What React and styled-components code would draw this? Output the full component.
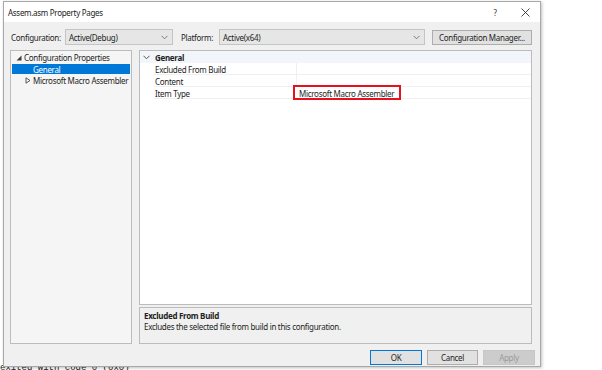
import React from 'react';
import styled, { createGlobalStyle } from 'styled-components';

const GlobalStyle = createGlobalStyle`
    html, body {
        margin: 0;
        padding: 0;
        background: #ffffff;
    }
    body {
        font-family: "Noto Sans", "Open Sans", sans-serif;
        font-size: 8px;
        letter-spacing: -0.3px;
        color: #1e1e1e;
    }
    svg {
        flex-shrink: 0;
    }
`

const Chevron = ({ color = '#6d6d6d' }) => (
    <svg width="7" height="5" viewBox="0 0 7 5">
        <path d="M0.5 0.8 L3.5 3.8 L6.5 0.8" fill="none" stroke={color} strokeWidth="0.9" />
    </svg>
)

const Triangle = ({ open }) => open ? (
    <svg width="6" height="6" viewBox="0 0 6 6">
        <path d="M5.5 0.5 L5.5 5.5 L0.5 5.5 Z" fill="#3c3c3c" />
    </svg>
) : (
    <svg width="6" height="7" viewBox="0 0 6 7">
        <path d="M1 0.8 L5 3.5 L1 6.2 Z" fill="none" stroke="#4a4a4a" strokeWidth="0.9" />
    </svg>
)

const App = () => {
    return (
        <Desktop>
            <GlobalStyle />
            <OutputLine>exited with code 0 (0x0)</OutputLine>
            <Dialog>
                <TitleBar>
                    <Title>Assem.asm Property Pages</Title>
                    <TitleButtons>
                        <TitleButton>?</TitleButton>
                        <TitleButton>
                            <svg width="9" height="9" viewBox="0 0 9 9">
                                <path d="M0.5 0.5 L8.5 8.5 M8.5 0.5 L0.5 8.5" stroke="#333" strokeWidth="0.9" />
                            </svg>
                        </TitleButton>
                    </TitleButtons>
                </TitleBar>
                <Body>
                    <ConfigRow>
                        <Label width="55px">Configuration:</Label>
                        <Select width="108px">
                            <span>Active(Debug)</span>
                            <Chevron />
                        </Select>
                        <Label width="39px" margin="0 0 0 7px">Platform:</Label>
                        <Select width="206px">
                            <span>Active(x64)</span>
                            <Chevron />
                        </Select>
                        <Button width="100px" margin="0 0 0 7px">Configuration Manager...</Button>
                    </ConfigRow>
                    <Main>
                        <Tree>
                            <TreeRow indent="4px">
                                <Triangle open />
                                <span>Configuration Properties</span>
                            </TreeRow>
                            <TreeRow indent="21px" selected>
                                <span>General</span>
                            </TreeRow>
                            <TreeRow indent="13px">
                                <Triangle />
                                <span>Microsoft Macro Assembler</span>
                            </TreeRow>
                        </Tree>
                        <RightCol>
                            <Grid>
                                <GroupHeader>
                                    <Chevron color="#444" />
                                    <strong>General</strong>
                                </GroupHeader>
                                <PropRow>
                                    <PropName>Excluded From Build</PropName>
                                    <PropValue></PropValue>
                                </PropRow>
                                <PropRow>
                                    <PropName>Content</PropName>
                                    <PropValue></PropValue>
                                </PropRow>
                                <PropRow>
                                    <PropName>Item Type</PropName>
                                    <PropValue>
                                        <Highlight>Microsoft Macro Assembler</Highlight>
                                    </PropValue>
                                </PropRow>
                            </Grid>
                            <Description>
                                <DescTitle>Excluded From Build</DescTitle>
                                <DescText>Excludes the selected file from build in this configuration.</DescText>
                            </Description>
                        </RightCol>
                    </Main>
                    <Footer>
                        <Button width="52px" primary>OK</Button>
                        <Button width="51px">Cancel</Button>
                        <Button width="52px" disabled>Apply</Button>
                    </Footer>
                </Body>
            </Dialog>
        </Desktop>
    );
}

export default App;

const Desktop = styled.div`
    position: relative;
    width: 602px;
    height: 370px;
    overflow: hidden;
    background: #ffffff;
`
const OutputLine = styled.div`
    position: absolute;
    left: 0;
    top: 363px;
    font-family: "Liberation Mono", monospace;
    font-size: 9px;
    letter-spacing: 0;
    color: #222;
    white-space: nowrap;
`
const Dialog = styled.div`
    position: absolute;
    left: 3px;
    top: 1px;
    width: 538px;
    height: 366px;
    display: flex;
    flex-direction: column;
    box-sizing: border-box;
    border: 1px solid #a8a8a8;
    background: #f0f0f0;
    box-shadow: 1px 1px 3px rgba(0, 0, 0, 0.25);
`
const TitleBar = styled.div`
    display: flex;
    align-items: center;
    justify-content: space-between;
    height: 20px;
    padding: 0 0 0 4px;
    background: #ffffff;
`
const Title = styled.div`
    color: #1a1a1a;
`
const TitleButtons = styled.div`
    display: flex;
    align-items: center;
`
const TitleButton = styled.div`
    display: flex;
    align-items: center;
    justify-content: center;
    width: 30px;
    height: 20px;
    font-size: 8px;
    color: #333;
`
const Body = styled.div`
    flex: 1;
    display: flex;
    flex-direction: column;
    padding: 7px 8px 3px 6px;
    min-height: 0;
`
const ConfigRow = styled.div`
    display: flex;
    align-items: center;
    height: 16px;
`
const Label = styled.div`
    width: ${props => props.width};
    margin: ${props => props.margin || '0'};
    padding-left: 1px;
    box-sizing: border-box;
    white-space: nowrap;
`
const Select = styled.div`
    display: flex;
    align-items: center;
    justify-content: space-between;
    box-sizing: border-box;
    width: ${props => props.width};
    height: 16px;
    padding: 0 4px 0 3px;
    background: #e6e6e6;
    border: 1px solid #c4c4c4;
    color: #1e1e1e;
`
const Button = styled.div`
    display: flex;
    align-items: center;
    justify-content: center;
    box-sizing: border-box;
    width: ${props => props.width};
    height: 15px;
    margin: ${props => props.margin || '0'};
    background: ${props => props.disabled ? '#cccccc' : '#e1e1e1'};
    border: 1px solid ${props => props.primary ? '#0078d7' : props.disabled ? '#c6c6c6' : '#adadad'};
    color: ${props => props.disabled ? '#9a9a9a' : '#1e1e1e'};
    white-space: nowrap;
`
const Main = styled.div`
    flex: 1;
    display: flex;
    gap: 7px;
    margin-top: 5px;
    min-height: 0;
`
const Tree = styled.div`
    width: 122px;
    box-sizing: border-box;
    padding: 1px 1px;
    background: #f5f5f5;
    border: 1px solid #bcbcbc;
`
const TreeRow = styled.div`
    display: flex;
    align-items: center;
    gap: 2px;
    height: ${props => props.selected ? '10px' : '11px'};
    margin: ${props => props.selected ? '1px 0' : '0'};
    padding-left: ${props => props.indent};
    background: ${props => props.selected ? '#0078d7' : 'transparent'};
    color: ${props => props.selected ? '#ffffff' : '#1e1e1e'};
    white-space: nowrap;
`
const RightCol = styled.div`
    flex: 1;
    display: flex;
    flex-direction: column;
    gap: 2px;
`
const Grid = styled.div`
    flex: 1;
    box-sizing: border-box;
    background: #ffffff;
    border: 1px solid #bcbcbc;
`
const GroupHeader = styled.div`
    display: flex;
    align-items: center;
    gap: 5px;
    height: 12px;
    padding-left: 3px;
    background: #f2f5fa;
    strong {
        font-weight: 700;
    }
`
const PropRow = styled.div`
    display: flex;
    height: 11px;
    margin-left: 14px;
    border-bottom: 1px solid #f0f0f0;
`
const PropName = styled.div`
    display: flex;
    align-items: center;
    width: 141px;
    padding: 1px 0 0 1px;
    border-right: 1px solid #f0f0f0;
`
const PropValue = styled.div`
    flex: 1;
    display: flex;
    align-items: center;
`
const Highlight = styled.div`
    display: flex;
    align-items: center;
    box-sizing: border-box;
    height: 15px;
    padding: 1px 5px 0 4px;
    margin-left: -4px;
    border: 2px solid #e8101c;
    background: #ffffff;
    white-space: nowrap;
`
const Description = styled.div`
    height: 37px;
    box-sizing: border-box;
    padding: 2px 4px;
    background: #f0f0f0;
    border: 1px solid #bcbcbc;
`
const DescTitle = styled.div`
    font-weight: 700;
    line-height: 11px;
`
const DescText = styled.div`
    line-height: 11px;
`
const Footer = styled.div`
    display: flex;
    justify-content: flex-end;
    gap: 5px;
    padding: 6px 0 0 0;
    margin-right: -3px;
    height: 19px;
    box-sizing: border-box;
`
